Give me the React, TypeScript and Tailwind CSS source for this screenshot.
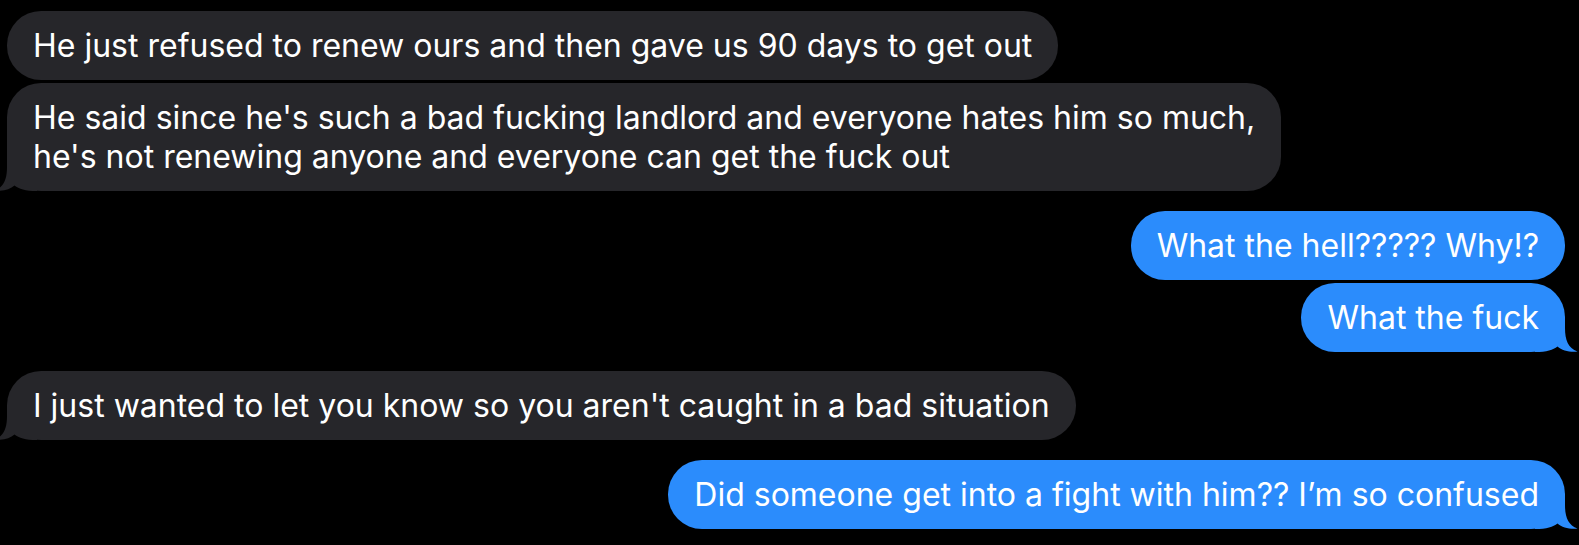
import React from 'react';

type Msg = { from: 'them' | 'me'; lines: string[]; tail?: boolean; gap?: boolean };

const messages: Msg[] = [
  { from: 'them', lines: ['He just refused to renew ours and then gave us 90 days to get out'] },
  {
    from: 'them',
    lines: [
      "He said since he's such a bad fucking landlord and everyone hates him so much,",
      "he's not renewing anyone and everyone can get the fuck out",
    ],
    tail: true,
  },
  { from: 'me', lines: ['What the hell????? Why!?'], gap: true },
  { from: 'me', lines: ['What the fuck'], tail: true },
  { from: 'them', lines: ["I just wanted to let you know so you aren't caught in a bad situation"], tail: true, gap: true },
  { from: 'me', lines: ['Did someone get into a fight with him?? I’m so confused'], tail: true, gap: true },
];

function Tail({ side, color }: { side: 'left' | 'right'; color: string }) {
  const pos = side === 'right' ? 'right-[-13px]' : 'left-[-13px] -scale-x-100';
  return (
    <svg
      className={`absolute bottom-0 ${pos} w-[43px] h-[34px]`}
      viewBox="0 0 43 34"
      fill={color}
    >
      <path d="M0 0 H30 V10 C30 22 33 30 42.5 33.6 C35 34.5 27 32.5 22.5 28.5 C18 32 12 34 0 34 Z" />
    </svg>
  );
}

function Bubble({ msg }: { msg: Msg }) {
  const mine = msg.from === 'me';
  const color = mine ? '#2b8cfc' : '#26262a';
  return (
    <div className={`flex ${mine ? 'justify-end pr-[14px]' : 'justify-start pl-[7px]'} ${msg.gap ? 'mt-[19.5px]' : 'mt-[3px]'}`}>
      <div
        className={`relative rounded-[34px] px-[26px] py-[15px] text-[32px] leading-[39px] text-white ${
          mine ? 'bg-[#2b8cfc]' : 'bg-[#26262a]'
        }`}
      >
        {msg.tail && <Tail side={mine ? 'right' : 'left'} color={color} />}
        <div className="relative whitespace-nowrap">
          {msg.lines.map((l) => (
            <div key={l}>{l}</div>
          ))}
        </div>
      </div>
    </div>
  );
}

export default function App() {
  return (
    <div className="w-[1579px] h-[545px] bg-black pt-[8px] overflow-hidden font-['Inter','Liberation_Sans',sans-serif]">
      {messages.map((m, i) => (
        <Bubble key={i} msg={m} />
      ))}
    </div>
  );
}
